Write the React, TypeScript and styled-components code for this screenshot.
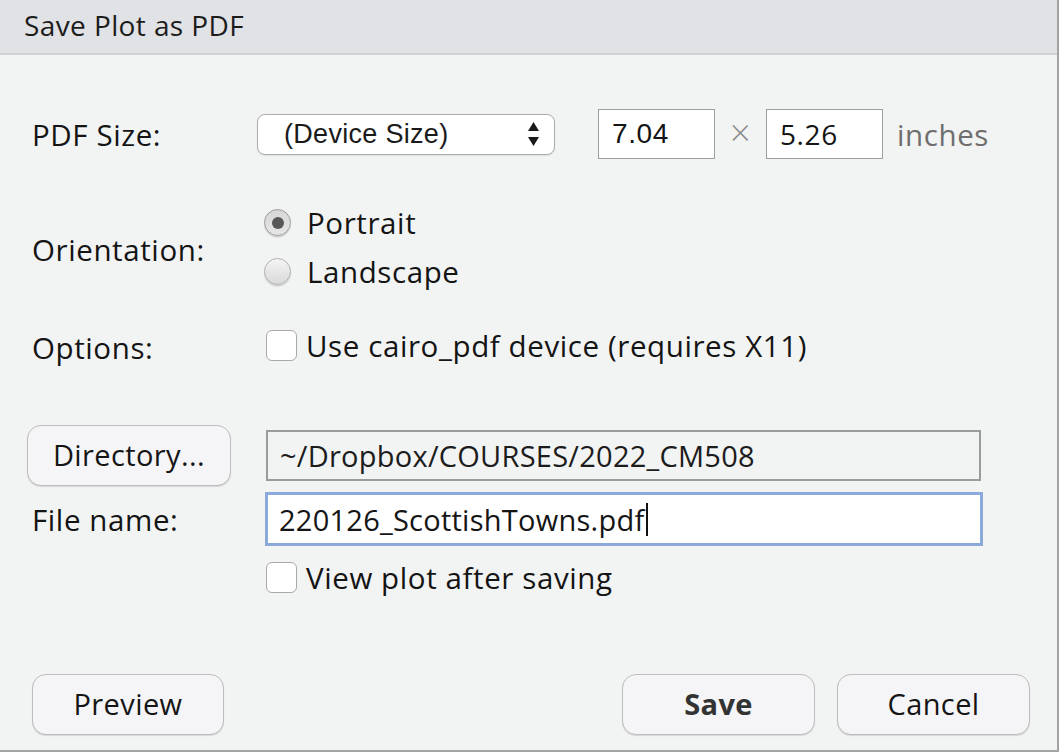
import React from "react";
import styled, { createGlobalStyle } from "styled-components";

const Global = createGlobalStyle`
  html, body {
    margin: 0;
    padding: 0;
    background: #ffffff;
    overflow: hidden;
  }
  * { box-sizing: border-box; }
`;

const Dialog = styled.div({
  width: 1059,
  height: 752,
  display: "flex",
  flexDirection: "column",
  background: "#f2f3f3",
  borderRight: "2px solid #a3a3a3",
  borderBottom: "2px solid #a3a3a3",
  fontFamily: '"Open Sans", "DejaVu Sans", sans-serif',
  letterSpacing: 0.6,
  color: "#141414",
});

const TitleBar = styled.div({
  height: 55,
  flexShrink: 0,
  display: "flex",
  alignItems: "center",
  paddingLeft: 24,
  paddingBottom: 4,
  background: "#e1e2e6",
  borderBottom: "2px solid #d0d1d5",
  fontSize: 28,
  letterSpacing: 0.4,
  color: "#1c1c1c",
});

const Content = styled.div({
  flex: 1,
  display: "flex",
  flexDirection: "column",
  paddingLeft: 32,
  paddingRight: 27,
  paddingBottom: 15,
});

const Row = styled.div<{ $top: number; $height?: number }>`
  display: flex;
  align-items: center;
  margin-top: ${(p) => p.$top}px;
  height: ${(p) => (p.$height ? `${p.$height}px` : "auto")};
`;

const Label = styled.div<{ $offset?: number }>`
  width: 225px;
  flex-shrink: 0;
  font-size: 29.5px;
  padding-top: ${(p) => p.$offset ?? 0}px;
`;

const Select = styled.div({
  width: 298,
  height: 41,
  display: "flex",
  alignItems: "center",
  justifyContent: "space-between",
  padding: "0 14px 0 26px",
  background: "#ffffff",
  border: "1.5px solid #ababab",
  borderRadius: 8,
  boxShadow: "0 1px 1px rgba(0,0,0,0.08)",
  fontFamily: '"Liberation Sans", Arial, sans-serif',
  fontSize: 27,
  letterSpacing: 0.3,
  color: "#1a1a1a",
});

const NumberBox = styled.div<{ $font?: string }>`
  width: 117px;
  height: 50px;
  display: flex;
  align-items: center;
  padding-left: 13px;
  background: #ffffff;
  border: 1.5px solid #9d9d9d;
  font-family: ${(p) => p.$font ?? '"Open Sans", sans-serif'};
  font-size: 28px;
  color: #151515;
`;

const Times = styled.span({
  width: 51,
  textAlign: "center",
  fontSize: 36,
  lineHeight: 1,
  paddingBottom: 2,
  fontWeight: 300,
  color: "#8a8a8a",
});

const Unit = styled.span({
  marginLeft: 14,
  fontSize: 29.5,
  color: "#6e6e6e",
});

const Group = styled.div({
  display: "flex",
  flexDirection: "column",
  marginLeft: 7,
});

const RadioRow = styled.div({
  height: 49,
  display: "flex",
  alignItems: "center",
  gap: 16,
  fontSize: 29.5,
});

const RadioCircle = styled.span<{ $checked?: boolean }>`
  width: 27px;
  height: 27px;
  border-radius: 50%;
  display: flex;
  align-items: center;
  justify-content: center;
  border: 1px solid ${(p) => (p.$checked ? "#9a9a9a" : "#b0b0b0")};
  background: ${(p) =>
    p.$checked
      ? "linear-gradient(#d6d6d6, #e6e6e6)"
      : "linear-gradient(#f4f4f4, #d9d9d9)"};
  box-shadow: 0 1.5px 1px rgba(0, 0, 0, 0.15);
  &::after {
    content: "";
    display: ${(p) => (p.$checked ? "block" : "none")};
    width: 12px;
    height: 12px;
    border-radius: 50%;
    background: #575757;
  }
`;

const CheckRow = styled.div`
  display: flex;
  align-items: center;
  gap: 9px;
  margin-left: 9px;
  font-size: 29.5px;
`;

const CheckBox = styled.span({
  width: 31,
  height: 31,
  flexShrink: 0,
  background: "#ffffff",
  border: "1.5px solid #a9a9a9",
  borderRadius: 6,
});

const Button = styled.div<{ $width: number; $bold?: boolean }>`
  width: ${(p) => p.$width}px;
  height: 61px;
  flex-shrink: 0;
  display: flex;
  align-items: center;
  justify-content: center;
  padding-bottom: 2px;
  background: #f5f5f7;
  border: 1.5px solid #bdbdbd;
  border-radius: 14px;
  box-shadow: 0 1px 1px rgba(0, 0, 0, 0.12);
  font-size: 29px;
  letter-spacing: 0.4px;
  font-weight: ${(p) => (p.$bold ? 700 : 400)};
  color: ${(p) => (p.$bold ? "#333" : "#151515")};
`;

const PathField = styled.div({
  width: 715,
  height: 51,
  marginLeft: 35,
  display: "flex",
  alignItems: "center",
  paddingLeft: 12,
  background: "#f2f3f3",
  border: "2px solid #9b9b9b",
  fontSize: 29,
  letterSpacing: 0.25,
  color: "#1c1c1c",
});

const NameField = styled.div({
  width: 718,
  height: 54,
  marginLeft: 8,
  display: "flex",
  alignItems: "center",
  paddingLeft: 11,
  background: "#ffffff",
  border: "3px solid #8ba9d9",
  fontSize: 29,
  letterSpacing: 0.25,
  color: "#151515",
});

const Caret = styled.span({
  width: 2,
  height: 33,
  marginLeft: 2,
  background: "#111",
});

const Footer = styled.div({
  marginTop: "auto",
  display: "flex",
  alignItems: "center",
  gap: 22,
});

const Spacer = styled.div({ flex: 1 });

const Arrows = () => (
  <svg width="13" height="26" viewBox="0 0 13 26">
    <path d="M6.5 1 L12 10 L1 10 Z" fill="#1a1a1a" />
    <path d="M6.5 25 L12 16 L1 16 Z" fill="#1a1a1a" />
  </svg>
);

export default function App() {
  return (
    <>
      <Global />
      <Dialog>
        <TitleBar>Save Plot as PDF</TitleBar>
        <Content>
          <Row $top={54} $height={50}>
            <Label>PDF Size:</Label>
            <Select>
              <span>(Device Size)</span>
              <Arrows />
            </Select>
            <NumberBox $font='"Liberation Sans", Arial, sans-serif' style={{ marginLeft: 43 }}>
              7.04
            </NumberBox>
            <Times>×</Times>
            <NumberBox>5.26</NumberBox>
            <Unit>inches</Unit>
          </Row>

          <Row $top={39}>
            <Label $offset={4}>Orientation:</Label>
            <Group>
              <RadioRow>
                <RadioCircle $checked />
                Portrait
              </RadioRow>
              <RadioRow>
                <RadioCircle />
                Landscape
              </RadioRow>
            </Group>
          </Row>

          <Row $top={33} $height={32}>
            <Label $offset={4}>Options:</Label>
            <CheckRow>
              <CheckBox />
              Use cairo_pdf device (requires X11)
            </CheckRow>
          </Row>

          <Row $top={64} $height={60} style={{ marginLeft: -5 }}>
            <Button $width={204}>Directory...</Button>
            <PathField>~/Dropbox/COURSES/2022_CM508</PathField>
          </Row>

          <Row $top={7} $height={54}>
            <Label>File name:</Label>
            <NameField>
              220126_ScottishTowns.pdf
              <Caret />
            </NameField>
          </Row>

          <Row $top={16} $height={31}>
            <Label />
            <CheckRow>
              <CheckBox />
              View plot after saving
            </CheckRow>
          </Row>

          <Footer>
            <Button $width={192}>Preview</Button>
            <Spacer />
            <Button $width={193} $bold>
              Save
            </Button>
            <Button $width={193}>Cancel</Button>
          </Footer>
        </Content>
      </Dialog>
    </>
  );
}
